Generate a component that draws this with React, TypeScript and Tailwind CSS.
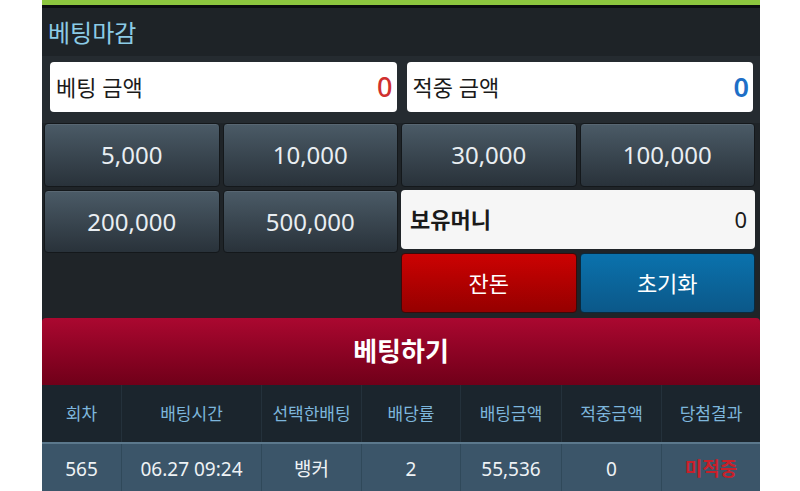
import React from 'react';

const FONT = { fontFamily: '"Noto Sans", "Noto Sans CJK KR", sans-serif' };

const CHIPS = ['5,000', '10,000', '30,000', '100,000'];

const COLS = [
    { label: '회차', w: 'w-[80px]', value: '565' },
    { label: '배팅시간', w: 'w-[140px]', value: '06.27 09:24' },
    { label: '선택한배팅', w: 'w-[100px]', value: '뱅커' },
    { label: '배당률', w: 'w-[99px]', value: '2' },
    { label: '배팅금액', w: 'w-[101px]', value: '55,536' },
    { label: '적중금액', w: 'w-[100px]', value: '0' },
    { label: '당첨결과', w: 'flex-1', value: '미적중' },
];

const ChipButton: React.FC<{ label: string; tall?: boolean }> = ({ label, tall }) => (
    <button
        className={`${tall ? 'h-[63px]' : 'h-full'} rounded-[4px] border border-[#14181b] bg-gradient-to-b from-[#4b5b67] to-[#29323a] text-[24px] text-[#e9eef2] shadow-[inset_0_1px_0_rgba(255,255,255,0.08)]`}
    >
        {label}
    </button>
);

export default function App() {
    return (
        <div className="h-[491px] w-full overflow-hidden bg-white" style={FONT}>
            <div className="ml-[42px] w-[718px] bg-[#1f2428]">
                <div className="h-[5px] bg-[#8dc63f]" />
                <div className="h-[3px] bg-[#0c0e0f]" />

                <div className="flex h-[48px] items-center bg-[#1e2327] px-[6px] pt-[2px] text-[24px] text-[#8ccbe6]">
                    베팅마감
                </div>

                <div className="flex gap-[10px] bg-[#252b30] pb-[11px] pl-[8px] pr-[7px] pt-[6px]">
                    <div className="flex h-[50px] flex-1 items-center justify-between rounded-[4px] bg-white pl-[6px] pr-[4px]">
                        <span className="text-[22px] text-[#1a1a1a]">베팅 금액</span>
                        <span className="text-[27px] font-medium text-[#d0302f]">0</span>
                    </div>
                    <div className="flex h-[50px] flex-1 items-center justify-between rounded-[4px] bg-white pl-[6px] pr-[4px]">
                        <span className="text-[22px] text-[#1a1a1a]">적중 금액</span>
                        <span className="text-[27px] font-semibold text-[#1e6fc7]">0</span>
                    </div>
                </div>

                <div className="grid grid-cols-4 grid-rows-[64px_60px_60px] gap-x-[3px] gap-y-[3px] pb-[5px] pl-[2px] pr-[5px]">
                    {CHIPS.map((c) => (
                        <ChipButton key={c} label={c} />
                    ))}
                    <ChipButton label="200,000" tall />
                    <ChipButton label="500,000" tall />
                    <div className="col-span-2 mb-[1px] flex items-center justify-between rounded-[4px] bg-[#f6f6f6] pl-[9px] pr-[8px]">
                        <span className="text-[22px] font-bold text-[#1a1a1a]">보유머니</span>
                        <span className="text-[22px] text-[#1a1a1a]">0</span>
                    </div>
                    <div className="col-span-2" />
                    <button className="rounded-[4px] border border-[#3a0a0a] bg-gradient-to-b from-[#cc0202] to-[#960000] text-[22px] text-white">
                        잔돈
                    </button>
                    <button className="rounded-[4px] border border-[#0a2a3e] bg-gradient-to-b from-[#0a72ad] to-[#0b5889] text-[22px] text-white">
                        초기화
                    </button>
                </div>

                <button className="flex h-[67px] w-full items-center justify-center rounded-t-[4px] bg-gradient-to-b from-[#ab0830] to-[#700019] text-[26px] font-bold text-white">
                    베팅하기
                </button>

                <div className="flex h-[57px] bg-[#1b252d]">
                    {COLS.map((c) => (
                        <div
                            key={c.label}
                            className={`${c.w} flex items-center justify-center border-r border-[#24313b] text-[17px] text-[#7db6dc] last:border-r-0`}
                        >
                            {c.label}
                        </div>
                    ))}
                </div>

                <div className="flex h-[52px] border-t-2 border-[#5b788c] bg-[#3b5569]">
                    {COLS.map((c) => (
                        <div
                            key={c.label}
                            className={`${c.w} flex items-center justify-center border-r border-[#30495a] text-[19px] last:border-r-0 ${c.value === '미적중' ? 'font-bold text-[#c8202a]' : 'text-[#eef2f5]'}`}
                        >
                            {c.value}
                        </div>
                    ))}
                </div>
            </div>
        </div>
    );
}
